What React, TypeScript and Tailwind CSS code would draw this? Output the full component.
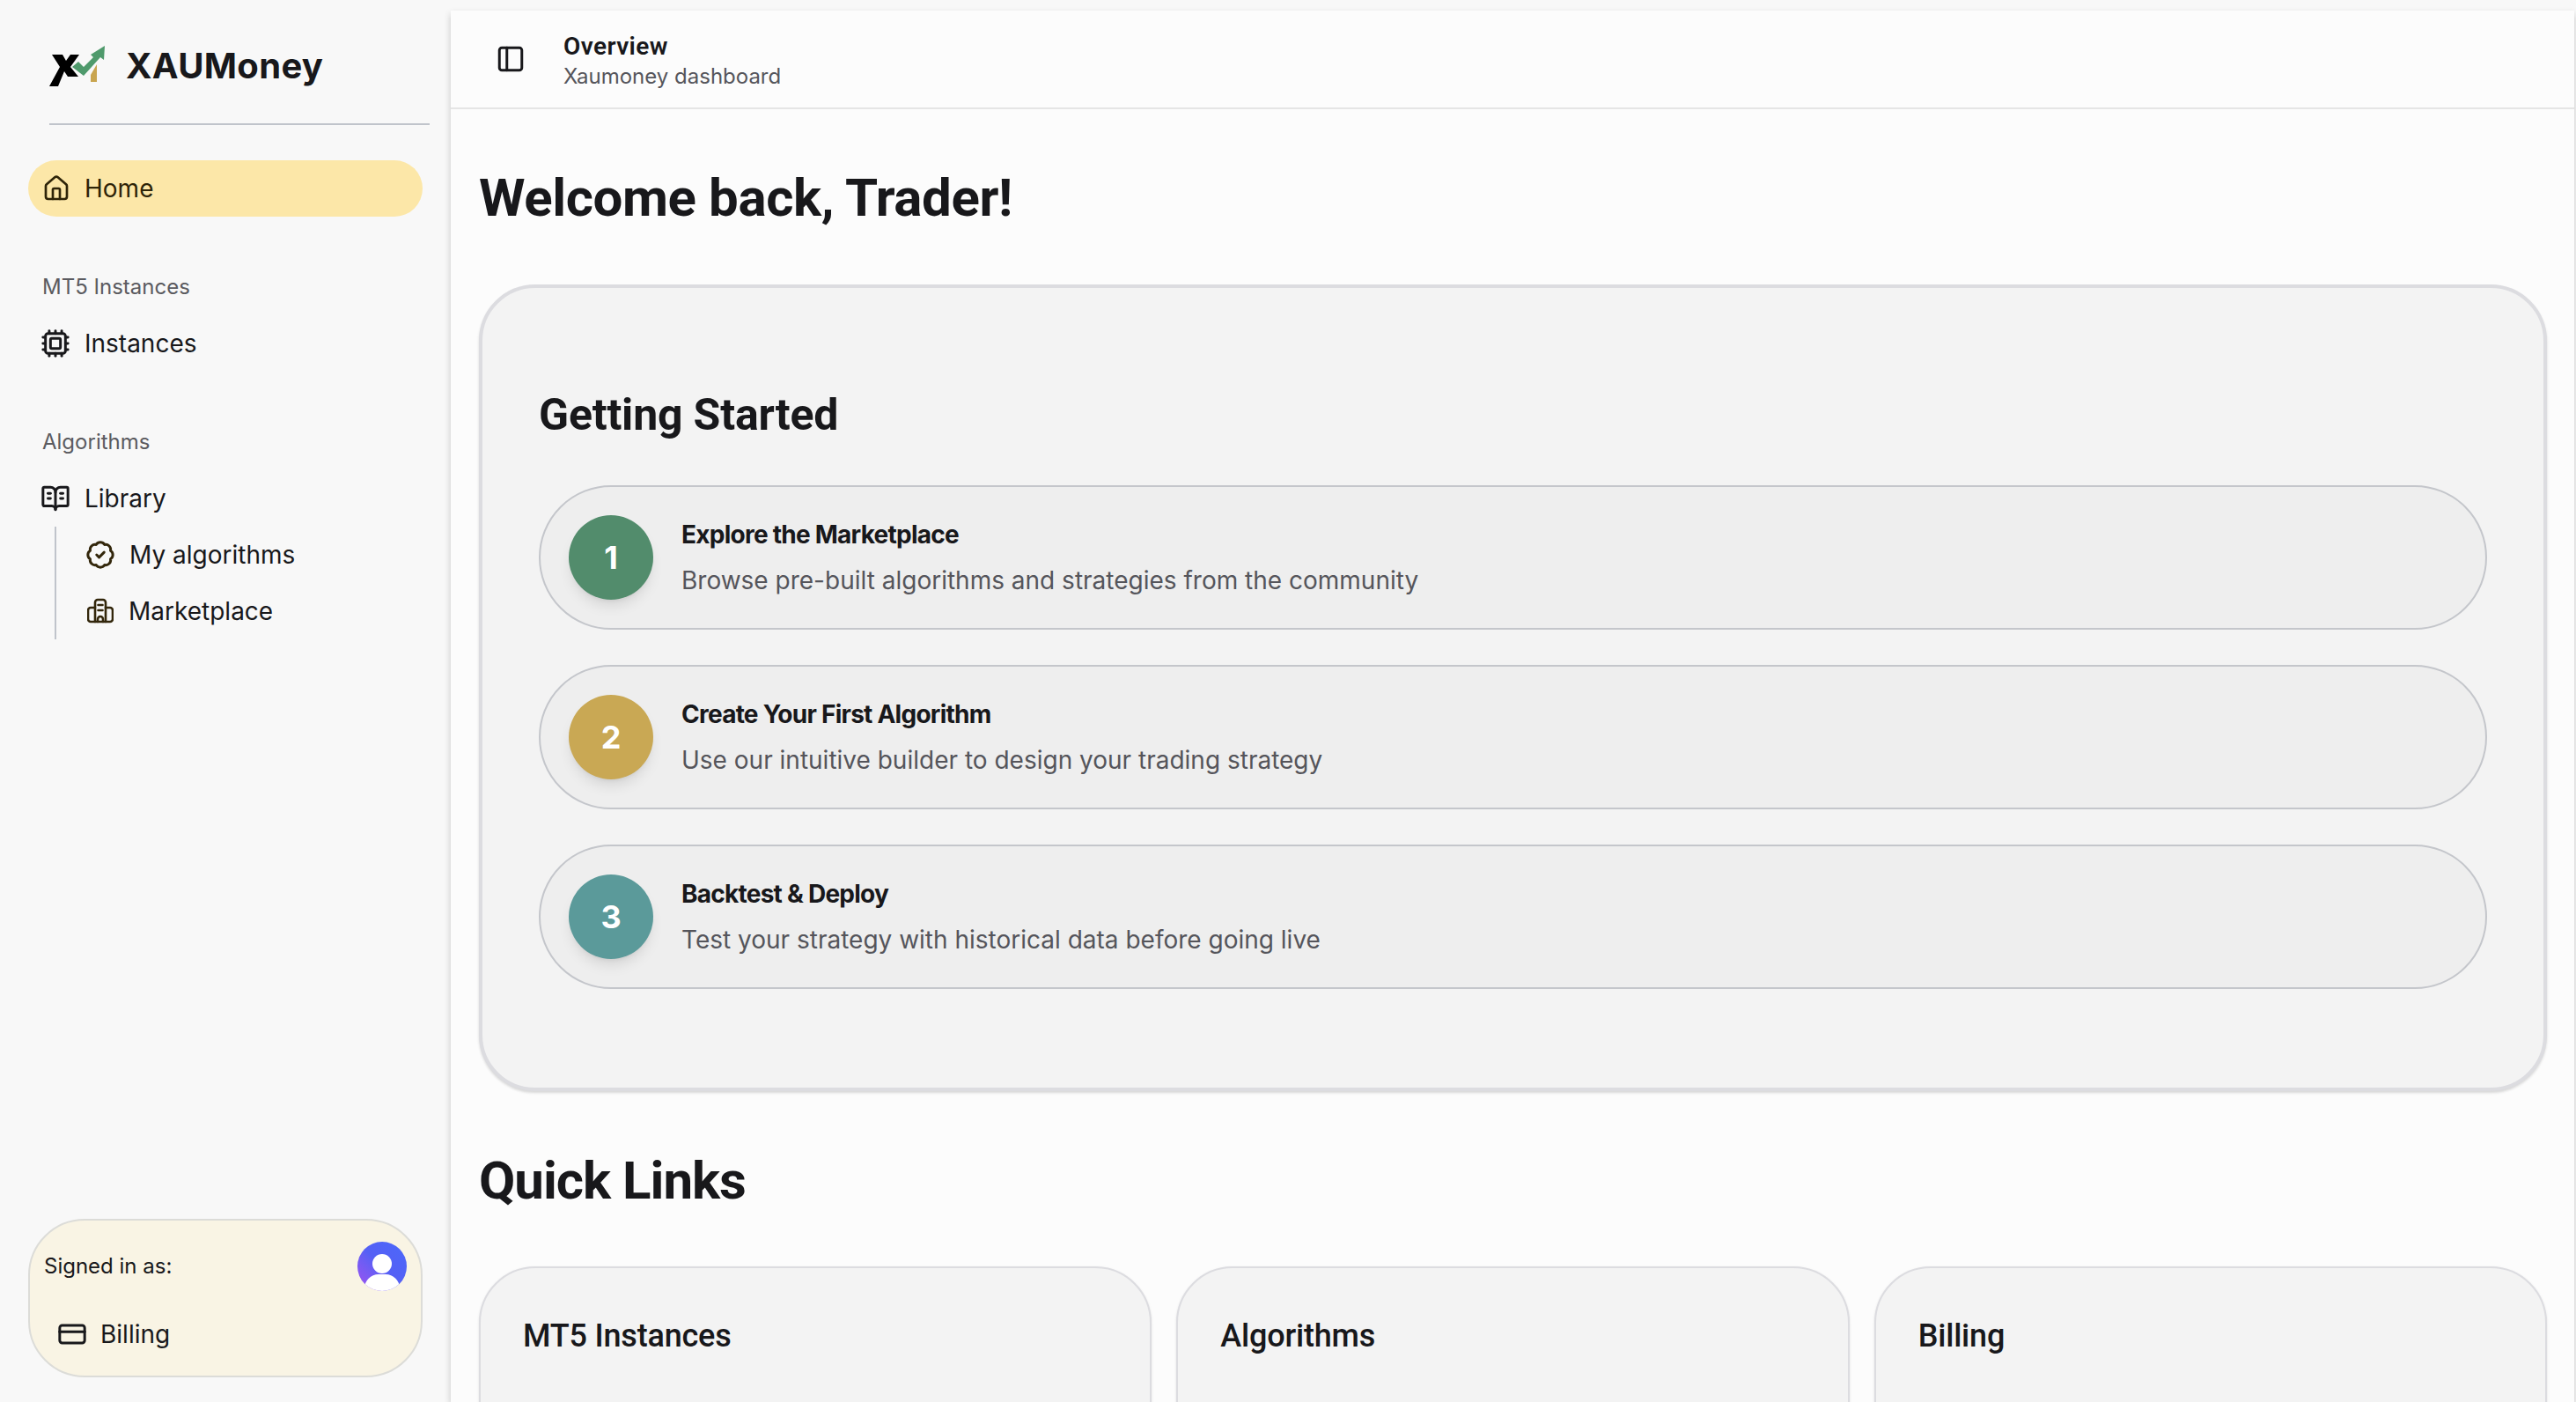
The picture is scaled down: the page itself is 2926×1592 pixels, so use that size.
import { BadgeCheck, BookOpenText, Cpu, CreditCard, House, PanelLeft } from 'lucide-react'

const headingFont = "font-['Roboto',sans-serif]"

const steps = [
    { n: 1, color: 'bg-[#528c6c]', title: 'Explore the Marketplace', desc: 'Browse pre-built algorithms and strategies from the community' },
    { n: 2, color: 'bg-[#c9a854]', title: 'Create Your First Algorithm', desc: 'Use our intuitive builder to design your trading strategy' },
    { n: 3, color: 'bg-[#5b9a9a]', title: 'Backtest & Deploy', desc: 'Test your strategy with historical data before going live' },
]

const Logo = () => (
    <svg width="64" height="48" viewBox="0 0 64 48" className="shrink-0">
        <path d="M3 11H15L19 18L24 11H34L24 25L33 36H21L17 30L10 47H0L12 25Z" fill="#000" />
        <path d="M26 25L33 19L39 25L50 14L47 11L63 1L62 17L58 14L39 35Z" fill="#4f9a6c" />
        <path d="M47 34L54 22V42H47Z" fill="#c9a54f" />
    </svg>
)

const MarketIcon = () => (
    <svg width="30" height="30" viewBox="0 0 30 30" fill="none" stroke="#33270c" strokeWidth="2.6" strokeLinecap="round" strokeLinejoin="round">
        <path d="M9 27V5a3 3 0 0 1 3-3h6a3 3 0 0 1 3 3v22" />
        <path d="M9 11H4a3 3 0 0 0-3 3v10a3 3 0 0 0 3 3h22a3 3 0 0 0 3-3V14a3 3 0 0 0-3-3h-5" />
        <path d="M12.5 8h5M12.5 14h5M12 27v-3a3 3 0 0 1 6 0v3" />
    </svg>
)

const Avatar = () => (
    <div className="relative w-14 h-14 rounded-full overflow-hidden bg-gradient-to-tr from-[#a04ff0] via-[#5560f5] to-[#4a68fa]">
        <div className="absolute left-[17px] top-[14px] w-[22px] h-[22px] rounded-full bg-white" />
        <div className="absolute left-[8px] top-[37px] w-10 h-8 rounded-full bg-white" />
    </div>
)

const App = () => {
    return (
        <div className="flex h-screen overflow-hidden bg-[#f8f8f8] text-[#18181b] font-['Inter',sans-serif]">
            <aside className="flex flex-col w-[512px] shrink-0 h-full pb-[28px]">
                <div className="flex flex-col pl-14 pr-6">
                    <div className="flex items-center gap-[23px] h-[92px] pt-[8px] mt-[25px] mb-[23px]">
                        <Logo />
                        <span className="text-[40px] font-bold tracking-[0.3px] text-[#18181b]">XAUMoney</span>
                    </div>
                </div>
                <div className="h-0.5 bg-[#c0c4cb] ml-14 mr-6" />
                <nav className="flex flex-col flex-1 px-8 mt-10">
                    <div className="flex items-center gap-[18px] h-16 px-[18px] rounded-full bg-[#fce7a8] text-[#2e2408] text-[28px]">
                        <House size={32} strokeWidth={2} className="-mx-[2px]" />
                        <span>Home</span>
                    </div>
                    <p className="mt-[64px] px-4 text-2xl text-[#5b5b60]">MT5 Instances</p>
                    <div className="flex items-center gap-[18px] h-16 mt-[16px] px-4 text-[28px]">
                        <Cpu size={34} strokeWidth={2.1} className="-mx-[2px]" />
                        <span>Instances</span>
                    </div>
                    <p className="mt-[64px] px-4 text-2xl text-[#5b5b60]">Algorithms</p>
                    <div className="flex items-center gap-[18px] h-16 mt-[16px] px-4 text-[28px]">
                        <BookOpenText size={34} strokeWidth={2.1} className="-mx-[2px]" />
                        <span>Library</span>
                    </div>
                    <div className="flex flex-col ml-[30px] border-l-2 border-[#c0c4cb]">
                        <div className="flex items-center gap-[18px] h-16 pl-[35px] text-[28px]">
                            <BadgeCheck size={34} strokeWidth={2.1} className="-mx-[2px] text-[#33270c]" />
                            <span>My algorithms</span>
                        </div>
                        <div className="flex items-center gap-[17px] h-16 pl-[35px] text-[28px]">
                            <MarketIcon />
                            <span>Marketplace</span>
                        </div>
                    </div>
                    <div className="flex flex-col mt-auto h-[180px] rounded-[64px] border-2 border-[#dcdcd8] bg-[#f9f4e4] pl-[16px] pr-4 pt-6">
                        <div className="flex items-center justify-between">
                            <span className="text-2xl">Signed in as:</span>
                            <Avatar />
                        </div>
                        <div className="flex items-center gap-[18px] mt-[28px] pl-[18px] text-[28px]">
                            <CreditCard size={34} strokeWidth={2.1} className="-mx-[3px]" />
                            <span>Billing</span>
                        </div>
                    </div>
                </nav>
            </aside>
            <main className="flex flex-col flex-1 min-w-0 mt-3 mr-0.5 bg-[#fcfcfc] overflow-hidden shadow-[0_4px_8px_rgba(0,0,0,0.2)]">
                <header className="flex items-center h-28 shrink-0 border-b-2 border-[#e5e5e5] pl-[51px] pt-[3px]">
                    <PanelLeft size={34} strokeWidth={2.1} className="-mt-[3px]" />
                    <div className="flex flex-col ml-[43px]">
                        <span className={`text-[28px] leading-9 font-semibold tracking-[0.4px] ${headingFont}`}>Overview</span>
                        <span className="text-2xl leading-8 text-[#55555b]">Xaumoney dashboard</span>
                    </div>
                </header>
                <div className="flex flex-col pl-8 pr-[31px]">
                    <h1 className={`mt-[63px] text-[60px] leading-[76px] font-bold tracking-[-0.4px] ${headingFont}`}>Welcome back, Trader!</h1>
                    <section className="mt-[60px] h-[916px] shrink-0 flex flex-col rounded-[64px] border-4 border-[#dcdce0] bg-[#f3f3f3] px-16 pt-[116px] shadow-[0_2px_3px_rgba(0,0,0,0.15)]">
                        <h2 className={`text-[50px] leading-[56px] font-bold tracking-[-0.2px] ${headingFont}`}>Getting Started</h2>
                        <div className="flex flex-col gap-10 mt-[52px]">
                            {steps.map((s) => (
                                <div key={s.n} className="flex items-center gap-8 h-[164px] rounded-full border-2 border-[#c4c6cb] bg-[#eeeeee] px-8">
                                    <div className={`flex items-center justify-center w-24 h-24 shrink-0 rounded-full text-white text-[36px] font-bold shadow-lg ${s.color}`}>{s.n}</div>
                                    <div className="flex flex-col">
                                        <span className="text-[28px] leading-[52px] font-bold tracking-[-0.75px]">{s.title}</span>
                                        <span className="text-[28px] leading-[52px] text-[#55555b]">{s.desc}</span>
                                    </div>
                                </div>
                            ))}
                        </div>
                    </section>
                    <h2 className={`mt-[64px] text-[60px] leading-[76px] font-bold tracking-[-1px] ${headingFont}`}>Quick Links</h2>
                    <div className="grid grid-cols-3 gap-7 mt-[59px]">
                        {['MT5 Instances', 'Algorithms', 'Billing'].map((t) => (
                            <div key={t} className="h-[320px] rounded-[64px] border-2 border-[#dcdce0] bg-[#f3f3f3] px-12 pt-[52px] shadow-sm">
                                <h3 className={`text-[36px] leading-[50px] font-medium tracking-[-0.2px] ${headingFont}`}>{t}</h3>
                            </div>
                        ))}
                    </div>
                </div>
            </main>
        </div>
    )
}

export default App
